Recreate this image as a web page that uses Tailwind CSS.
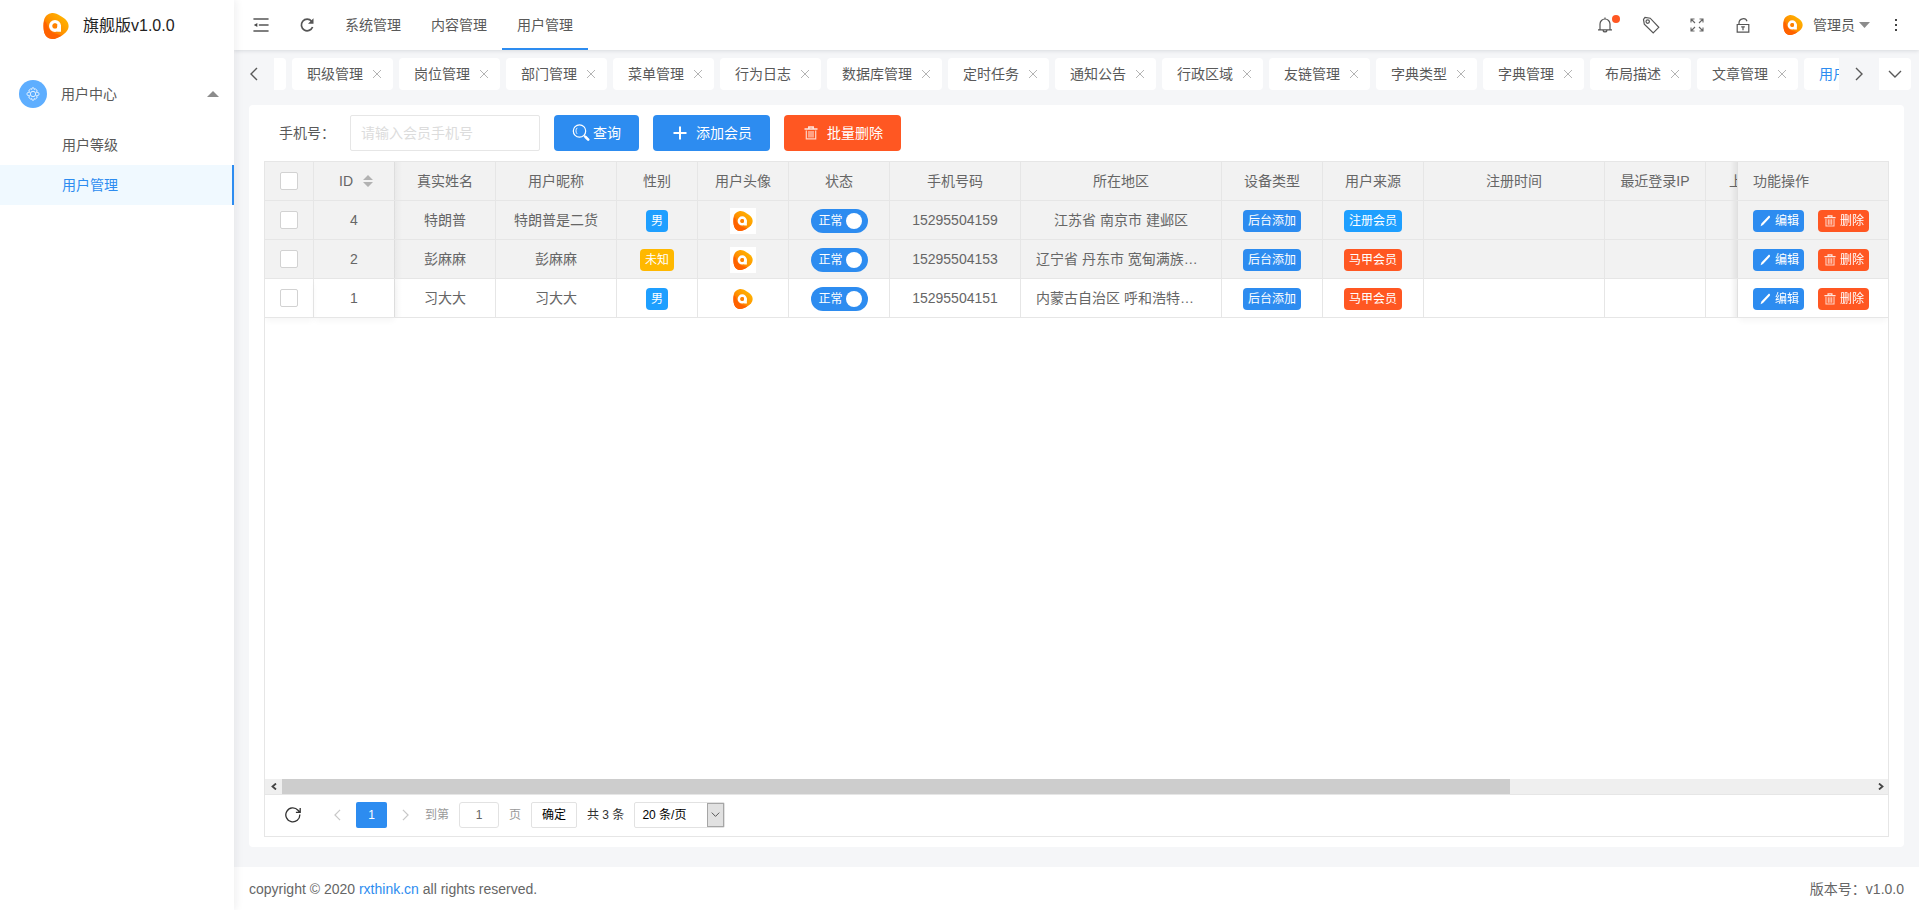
<!DOCTYPE html>
<html lang="zh-CN">
<head>
<meta charset="utf-8">
<meta name="viewport" content="width=device-width, initial-scale=1">
<title>用户管理 - 旗舰版v1.0.0</title>
<script src="https://cdn.jsdelivr.net/npm/@tailwindcss/browser@4"></script>
</head>
<body class="flex h-screen overflow-hidden bg-[#f5f6f8] font-['Liberation_Sans','Noto_Sans_CJK_SC',sans-serif] text-sm text-[#595959]">

<!-- Shared icons -->
<svg class="absolute size-0" aria-hidden="true">
  <defs>
    <linearGradient id="flame" x1="0.9" y1="0.1" x2="0.1" y2="0.9">
      <stop offset="0" stop-color="#ffb800"/><stop offset="0.5" stop-color="#ff9500"/><stop offset="1" stop-color="#ff5500"/>
    </linearGradient>
  </defs>
  <symbol id="i-logo" viewBox="0 0 26 26">
    <path fill="url(#flame)" d="M8 .3C11-.4 13.500 .6 18 3.200c4.500 2.600 7.600 5.500 7.600 9.800s-3 7.300-7.400 9.900C13.500 25.600 10.500 26.600 7 25.600 2.600 24.200.6 20.500.5 13S2.400 1.700 8 .3z"/>
    <path fill="#ff6200" d="M1.200 8C4.500 9.500 4 15 8 18.500c3.200 2.700 7.500 2.500 10.500 4.200-4.500 2.600-8 3.900-11.500 2.900C2.600 24.200.6 20.500.5 13c0-2 .3-3.600.7-5z"/>
    <circle cx="12" cy="12.900" r="4.300" fill="none" stroke="#fff" stroke-width="3.400"/>
    <path fill="#fff" d="M14 12h4v6.800h-2.600c-1 0-1.400-.6-1.400-1.600z"/>
    <circle cx="12" cy="12.900" r="2.400" fill="#ff8000"/>
  </symbol>
  <symbol id="i-x" viewBox="0 0 10 10"><path d="M1 1l8 8M9 1L1 9" fill="none" stroke="currentColor"/></symbol>
  <symbol id="i-left" viewBox="0 0 8 14"><path d="M7 1L1 7l6 6" fill="none" stroke="currentColor" stroke-width="1.400"/></symbol>
  <symbol id="i-right" viewBox="0 0 8 14"><path d="M1 1l6 6-6 6" fill="none" stroke="currentColor" stroke-width="1.400"/></symbol>
  <symbol id="i-down" viewBox="0 0 14 8"><path d="M1 1l6 6 6-6" fill="none" stroke="currentColor" stroke-width="1.400"/></symbol>
  <symbol id="i-trash" viewBox="0 0 14 14">
    <path d="M.5 3h13M4.800 2.500V1h4.400v1.500" fill="none" stroke="currentColor" stroke-width="1.500" opacity=".85"/>
    <path d="M2.300 4.500v8.300h9.400V4.500M5 5v6.500M7 5v6.500M9 5v6.500" fill="none" stroke="currentColor" stroke-width="1.200" opacity=".75"/>
  </symbol>
  <symbol id="i-pen" viewBox="0 0 14 14"><path fill="currentColor" d="M10.300 2.200c.5-.5 1.200-.4 1.500 0 .4.400.3 1 0 1.500L5 11 2.600 12.200l.8-2.700z"/></symbol>
</svg>

<aside class="relative z-20 flex w-[234px] shrink-0 flex-col bg-white shadow-[2px_0_8px_rgba(29,35,41,0.07)]">
  <div class="flex h-[52px] items-center gap-3.5 pl-[43px] text-base text-[#222]">
    <svg class="size-[26px]"><use href="#i-logo"/></svg>
    <span>旗舰版v1.0.0</span>
  </div>
  <nav class="pt-[17px]">
    <button class="flex h-[50px] w-full items-center pr-[15px] pl-[19px]">
      <span class="flex size-7 items-center justify-center rounded-full bg-[#5eaeff] text-white">
        <svg class="size-3.5" viewBox="0 0 14 14" fill="none" stroke="currentColor" stroke-width=".8">
          <path d="M5.800 2.400Q5.400.7 7 .7t1.200 1.700Q9.500 1.200 10.900 3.100q.9 1.300-.7 2Q12.900 4.900 13.200 7q-.3 2.100-3 1.900 1.600.7.700 2-1.400 1.900-2.700.7.400 1.700-1.200 1.700t-1.200-1.700q-1.300 1.200-2.700-.7-.9-1.300.7-2Q1.100 9.100.8 7q.3-2.100 3-1.900-1.600-.7-.7-2 1.400-1.900 2.700-.7z"/><circle cx="7" cy="7" r="2.700"/>
        </svg>
      </span>
      <span class="ml-3.5">用户中心</span>
      <svg class="ml-auto h-1.5 w-3" viewBox="0 0 12 6"><path d="M0 6l6-6 6 6z" fill="#8c8c8c"/></svg>
    </button>
    <ul class="pt-[6px]">
      <li><a href="#" class="flex h-10 items-center pl-[62px]">用户等级</a></li>
      <li><a href="#" class="flex h-10 items-center border-r-2 border-[#2d8cf0] bg-[#f0f9ff] pl-[62px] text-[#2d8cf0]">用户管理</a></li>
    </ul>
  </nav>
</aside>

<div class="flex min-w-0 flex-1 flex-col">
  <header class="relative z-10 flex h-[50px] shrink-0 items-center justify-between bg-white shadow-[0_1px_4px_rgba(0,21,41,0.12)]">
    <div class="flex h-full items-center">
      <button class="flex h-full w-[46px] items-center justify-center pl-2" aria-label="折叠菜单">
        <svg class="h-3.5 w-4" viewBox="0 0 16 14" fill="none" stroke="#555" stroke-width="1.600" stroke-linecap="round"><path d="M1 1h14M6.500 7H15M1 13h14"/><path d="M4.300 4.900v4.200L.8 7z" fill="#444" stroke="none"/></svg>
      </button>
      <button class="flex h-full w-[50px] items-center justify-center pl-1" aria-label="刷新">
        <svg class="size-4" viewBox="0 0 16 16"><path d="M12.600 4.200A5.800 5.800 0 1 0 13.600 10" fill="none" stroke="#555" stroke-width="1.700"/><path d="M14.500 1.300v5.500H9z" fill="#555"/></svg>
      </button>
      <nav class="flex h-full">
        <a href="#" class="flex h-full items-center px-[15px]">系统管理</a>
        <a href="#" class="flex h-full items-center px-[15px]">内容管理</a>
        <a href="#" class="flex h-full items-center border-y-2 border-t-transparent border-b-[#2d8cf0] px-[15px]">用户管理</a>
      </nav>
    </div>
    <div class="flex h-full items-center pr-2">
      <button class="relative flex h-full w-[46px] items-center justify-center" aria-label="消息">
        <svg class="size-4" viewBox="0 0 16 16" fill="none" stroke="#555" stroke-width="1.200"><path d="M1 12.800h14M3 12.500V7a5 5 0 0 1 10 0v5.500M8 .6V2M6 13.500c.5 1.900 3.500 1.900 4 0"/></svg>
        <span class="absolute top-[15px] right-2 size-2 rounded-full bg-[#ff5722]"></span>
      </button>
      <button class="flex h-full w-[46px] items-center justify-center" aria-label="标签">
        <svg class="size-[18px]" viewBox="0 0 18 18" fill="none" stroke="#555" stroke-width="1.200"><path d="M1.500 3.300l.8 5L11.200 17l5.600-5.700L8.200 2.200 3 1.400z"/><circle cx="5.700" cy="5.600" r="1.700"/></svg>
      </button>
      <button class="flex h-full w-[46px] items-center justify-center" aria-label="全屏">
        <svg class="size-3.5" viewBox="0 0 14 14" fill="none" stroke="#666" stroke-width="1.100"><path d="M1 4.500V1h3.500M1 1l4 4M9.500 1H13v3.500M13 1L9 5M1 9.500V13h3.500M1 13l4-4M9.500 13H13V9.500M13 13L9 9"/></svg>
      </button>
      <button class="flex h-full w-[46px] items-center justify-center" aria-label="锁屏">
        <svg class="h-[15px] w-3.5" viewBox="0 0 14 15" fill="none" stroke="#555" stroke-width="1.200"><path d="M1.200 6.500h11.600v7.600H1.200zM3 6.500V5c0-5 6.800-5.600 8-1.800M5.200 8.900h3.600M7 9v3.200"/></svg>
      </button>
      <button class="ml-[17px] flex h-full items-center">
        <svg class="size-5"><use href="#i-logo"/></svg>
        <span class="ml-[10px]">管理员</span>
        <svg class="ml-1 h-1.5 w-[11px]" viewBox="0 0 11 6"><path d="M0 0h11L5.500 6z" fill="#8c8c8c"/></svg>
      </button>
      <button class="ml-[11px] flex h-full w-[30px] items-center justify-center" aria-label="更多">
        <svg class="h-3.5 w-1" viewBox="0 0 4 14" fill="#444"><path d="M1 1h2v2H1zM1 6h2v2H1zM1 11h2v2H1z"/></svg>
      </button>
    </div>
  </header>

  <div class="flex shrink-0 pt-2 pr-2">
    <button class="flex h-8 w-10 shrink-0 items-center justify-center" aria-label="向左"><svg class="h-3.5 w-2"><use href="#i-left"/></svg></button>
    <ul class="flex min-w-0 flex-1 justify-end gap-1.5 overflow-hidden">
      <li class="h-8 w-3 shrink-0 rounded-r bg-white"></li>
      <li class="flex h-8 shrink-0 items-center gap-[9px] rounded bg-white pr-[11px] pl-[15px]"><a href="#">职级管理</a><button aria-label="关闭" class="text-[#b4b4b4]"><svg class="size-2.5"><use href="#i-x"/></svg></button></li>
      <li class="flex h-8 shrink-0 items-center gap-[9px] rounded bg-white pr-[11px] pl-[15px]"><a href="#">岗位管理</a><button aria-label="关闭" class="text-[#b4b4b4]"><svg class="size-2.5"><use href="#i-x"/></svg></button></li>
      <li class="flex h-8 shrink-0 items-center gap-[9px] rounded bg-white pr-[11px] pl-[15px]"><a href="#">部门管理</a><button aria-label="关闭" class="text-[#b4b4b4]"><svg class="size-2.5"><use href="#i-x"/></svg></button></li>
      <li class="flex h-8 shrink-0 items-center gap-[9px] rounded bg-white pr-[11px] pl-[15px]"><a href="#">菜单管理</a><button aria-label="关闭" class="text-[#b4b4b4]"><svg class="size-2.5"><use href="#i-x"/></svg></button></li>
      <li class="flex h-8 shrink-0 items-center gap-[9px] rounded bg-white pr-[11px] pl-[15px]"><a href="#">行为日志</a><button aria-label="关闭" class="text-[#b4b4b4]"><svg class="size-2.5"><use href="#i-x"/></svg></button></li>
      <li class="flex h-8 shrink-0 items-center gap-[9px] rounded bg-white pr-[11px] pl-[15px]"><a href="#">数据库管理</a><button aria-label="关闭" class="text-[#b4b4b4]"><svg class="size-2.5"><use href="#i-x"/></svg></button></li>
      <li class="flex h-8 shrink-0 items-center gap-[9px] rounded bg-white pr-[11px] pl-[15px]"><a href="#">定时任务</a><button aria-label="关闭" class="text-[#b4b4b4]"><svg class="size-2.5"><use href="#i-x"/></svg></button></li>
      <li class="flex h-8 shrink-0 items-center gap-[9px] rounded bg-white pr-[11px] pl-[15px]"><a href="#">通知公告</a><button aria-label="关闭" class="text-[#b4b4b4]"><svg class="size-2.5"><use href="#i-x"/></svg></button></li>
      <li class="flex h-8 shrink-0 items-center gap-[9px] rounded bg-white pr-[11px] pl-[15px]"><a href="#">行政区域</a><button aria-label="关闭" class="text-[#b4b4b4]"><svg class="size-2.5"><use href="#i-x"/></svg></button></li>
      <li class="flex h-8 shrink-0 items-center gap-[9px] rounded bg-white pr-[11px] pl-[15px]"><a href="#">友链管理</a><button aria-label="关闭" class="text-[#b4b4b4]"><svg class="size-2.5"><use href="#i-x"/></svg></button></li>
      <li class="flex h-8 shrink-0 items-center gap-[9px] rounded bg-white pr-[11px] pl-[15px]"><a href="#">字典类型</a><button aria-label="关闭" class="text-[#b4b4b4]"><svg class="size-2.5"><use href="#i-x"/></svg></button></li>
      <li class="flex h-8 shrink-0 items-center gap-[9px] rounded bg-white pr-[11px] pl-[15px]"><a href="#">字典管理</a><button aria-label="关闭" class="text-[#b4b4b4]"><svg class="size-2.5"><use href="#i-x"/></svg></button></li>
      <li class="flex h-8 shrink-0 items-center gap-[9px] rounded bg-white pr-[11px] pl-[15px]"><a href="#">布局描述</a><button aria-label="关闭" class="text-[#b4b4b4]"><svg class="size-2.5"><use href="#i-x"/></svg></button></li>
      <li class="flex h-8 shrink-0 items-center gap-[9px] rounded bg-white pr-[11px] pl-[15px]"><a href="#">文章管理</a><button aria-label="关闭" class="text-[#b4b4b4]"><svg class="size-2.5"><use href="#i-x"/></svg></button></li>
      <li class="flex h-8 w-[35px] shrink-0 items-center overflow-hidden rounded-l bg-white pl-[15px] whitespace-nowrap text-[#2d8cf0]"><a href="#">用户管理</a></li>
    </ul>
    <button class="flex h-8 w-10 shrink-0 items-center justify-center" aria-label="向右"><svg class="h-3.5 w-2"><use href="#i-right"/></svg></button>
    <button class="flex size-8 shrink-0 items-center justify-center rounded-r bg-white" aria-label="展开标签"><svg class="h-2 w-3.5"><use href="#i-down"/></svg></button>
  </div>

  <main class="mx-[15px] mt-[15px] mb-5 flex min-h-0 flex-1 flex-col rounded bg-white px-[15px] py-2.5">
    <form class="flex items-center pb-2.5 pl-[15px]" onsubmit="return false">
      <label for="phone" class="w-[71px]">手机号：</label>
      <input id="phone" type="text" placeholder="请输入会员手机号" class="mr-3.5 h-9 w-[190px] rounded-xs border border-[#e6e6e6] px-2.5 outline-none placeholder:text-[#dcdcdc]">
      <button class="mr-3.5 flex h-9 items-center gap-[3px] rounded bg-[#2d8cf0] px-[18px] text-white">
        <svg class="size-[18px]" viewBox="0 0 18 18" fill="none" stroke="currentColor"><circle cx="7.500" cy="7" r="6.200" stroke-width="1.200"/><path d="M5.200 3.800C3.600 5.500 3.600 8 5 9.800" stroke-width=".9"/><path d="M12 11.600l1.600 1.400" stroke-width="1.400"/><path d="M13.600 13l2.600 2.600" stroke-width="2.600" stroke-linecap="round"/></svg>查询
      </button>
      <button class="mr-3.5 flex h-9 items-center gap-[7px] rounded bg-[#2d8cf0] px-[18px] text-white">
        <svg class="size-[18px]" viewBox="0 0 18 18"><path d="M9 2.500v13M2.500 9h13" stroke="currentColor" stroke-width="2"/></svg>添加会员
      </button>
      <button class="flex h-9 items-center gap-[7px] rounded bg-[#ff5722] px-[18px] text-white">
        <span class="flex w-[18px] justify-center"><svg class="size-3.5"><use href="#i-trash"/></svg></span>批量删除
      </button>
    </form>

    <section class="flex min-h-0 flex-1 flex-col border border-[#e6e6e6] text-[#666]">
      <div class="min-h-0 flex-1 overflow-hidden">
        <table class="w-[1722px] min-w-full table-fixed border-separate border-spacing-0 text-center [&_td]:h-[39px] [&_td]:border-r [&_td]:border-b [&_td]:border-[#e6e6e6] [&_td]:p-0 [&_td:has(span,label,button)]:pt-[2px] [&_th]:h-[39px] [&_th]:border-r [&_th]:border-b [&_th]:border-[#e6e6e6] [&_th]:p-0 [&_th]:font-normal">
          <colgroup>
            <col class="w-[49px]"><col class="w-[81px]"><col class="w-[101px]"><col class="w-[121px]"><col class="w-[81px]"><col class="w-[91px]"><col class="w-[101px]"><col class="w-[131px]"><col class="w-[201px]"><col class="w-[101px]"><col class="w-[101px]"><col class="w-[181px]"><col class="w-[101px]"><col class="w-[131px]"><col class="w-[150px]">
          </colgroup>
          <thead>
            <tr class="bg-[#f2f2f2]">
              <th><input type="checkbox" aria-label="全选" class="block mx-auto size-[18px] appearance-none rounded-xs border border-[#d2d2d2] bg-white"></th>
              <th class="relative after:absolute after:inset-y-0 after:left-full after:w-2 after:bg-linear-to-r after:from-black/4 after:to-transparent">
                <button class="mx-auto flex items-center gap-2.5 pl-1">ID
                  <svg class="h-3 w-2.5" viewBox="0 0 10 12" fill="#b2b2b2"><path d="M0 5l5-5 5 5zM0 7h10l-5 5z"/></svg>
                </button>
              </th>
              <th>真实姓名</th><th>用户昵称</th><th>性别</th><th>用户头像</th><th>状态</th><th>手机号码</th><th>所在地区</th><th>设备类型</th><th>用户来源</th><th>注册时间</th><th>最近登录IP</th><th>上次登录地点</th>
              <th class="sticky right-0 z-10 border-r-0! bg-[#f2f2f2] pl-[15px]! text-left before:absolute before:inset-y-0 before:right-full before:w-2 before:border-r before:border-[#e0e0e0] before:bg-linear-to-l before:from-black/6 before:to-transparent">功能操作</th>
            </tr>
          </thead>
          <tbody>
            <tr class="bg-[#f2f2f2]">
              <td><input type="checkbox" aria-label="选择 4" class="block mx-auto size-[18px] appearance-none rounded-xs border border-[#d2d2d2] bg-white"></td>
              <td class="relative after:absolute after:inset-y-0 after:left-full after:w-2 after:bg-linear-to-r after:from-black/4 after:to-transparent">4</td>
              <td>特朗普</td><td>特朗普是二货</td>
              <td><span class="mx-auto flex h-[22px] w-fit items-center rounded bg-[#1e9fff] px-[5px] text-xs text-white">男</span></td>
              <td><span class="mx-auto flex size-[26px] items-center justify-center bg-white"><svg class="size-5"><use href="#i-logo"/></svg></span></td>
              <td><label class="mx-auto flex h-6 w-[57px] items-center gap-[3px] rounded-full bg-[#2d8cf0] pl-2 text-xs text-white">正常<input type="checkbox" role="switch" checked class="size-4 appearance-none rounded-full bg-white"></label></td>
              <td>15295504159</td>
              <td><div class="truncate px-[15px]">江苏省 南京市 建邺区</div></td>
              <td><span class="mx-auto flex h-[22px] w-fit items-center rounded bg-[#2d8cf0] px-[5px] text-xs text-white">后台添加</span></td>
              <td><span class="mx-auto flex h-[22px] w-fit items-center rounded bg-[#1e9fff] px-[5px] text-xs text-white">注册会员</span></td>
              <td></td><td></td><td></td>
              <td class="sticky right-0 z-10 border-r-0! bg-[#f2f2f2] pl-[15px]! before:absolute before:inset-y-0 before:right-full before:w-2 before:border-r before:border-[#e0e0e0] before:bg-linear-to-l before:from-black/6 before:to-transparent">
                <div class="flex gap-3.5 text-xs text-white">
                  <button class="flex h-[22px] items-center gap-[3px] rounded bg-[#2d8cf0] px-[5px]"><svg class="size-3.5"><use href="#i-pen"/></svg>编辑</button>
                  <button class="flex h-[22px] items-center gap-[3px] rounded bg-[#ff5722] px-[5px]"><svg class="h-3 w-3.5"><use href="#i-trash"/></svg>删除</button>
                </div>
              </td>
            </tr>
            <tr class="bg-[#f2f2f2]">
              <td><input type="checkbox" aria-label="选择 2" class="block mx-auto size-[18px] appearance-none rounded-xs border border-[#d2d2d2] bg-white"></td>
              <td class="relative after:absolute after:inset-y-0 after:left-full after:w-2 after:bg-linear-to-r after:from-black/4 after:to-transparent">2</td>
              <td>彭麻麻</td><td>彭麻麻</td>
              <td><span class="mx-auto flex h-[22px] w-fit items-center rounded bg-[#ffb800] px-[5px] text-xs text-white">未知</span></td>
              <td><span class="mx-auto flex size-[26px] items-center justify-center bg-white"><svg class="size-5"><use href="#i-logo"/></svg></span></td>
              <td><label class="mx-auto flex h-6 w-[57px] items-center gap-[3px] rounded-full bg-[#2d8cf0] pl-2 text-xs text-white">正常<input type="checkbox" role="switch" checked class="size-4 appearance-none rounded-full bg-white"></label></td>
              <td>15295504153</td>
              <td><div class="truncate px-[15px]">辽宁省 丹东市 宽甸满族自治县</div></td>
              <td><span class="mx-auto flex h-[22px] w-fit items-center rounded bg-[#2d8cf0] px-[5px] text-xs text-white">后台添加</span></td>
              <td><span class="mx-auto flex h-[22px] w-fit items-center rounded bg-[#ff5722] px-[5px] text-xs text-white">马甲会员</span></td>
              <td></td><td></td><td></td>
              <td class="sticky right-0 z-10 border-r-0! bg-[#f2f2f2] pl-[15px]! before:absolute before:inset-y-0 before:right-full before:w-2 before:border-r before:border-[#e0e0e0] before:bg-linear-to-l before:from-black/6 before:to-transparent">
                <div class="flex gap-3.5 text-xs text-white">
                  <button class="flex h-[22px] items-center gap-[3px] rounded bg-[#2d8cf0] px-[5px]"><svg class="size-3.5"><use href="#i-pen"/></svg>编辑</button>
                  <button class="flex h-[22px] items-center gap-[3px] rounded bg-[#ff5722] px-[5px]"><svg class="h-3 w-3.5"><use href="#i-trash"/></svg>删除</button>
                </div>
              </td>
            </tr>
            <tr class="bg-white">
              <td class="shadow-[0_4px_6px_-1px_rgba(0,0,0,0.04)]"><input type="checkbox" aria-label="选择 1" class="block mx-auto size-[18px] appearance-none rounded-xs border border-[#d2d2d2] bg-white"></td>
              <td class="relative shadow-[0_4px_6px_-1px_rgba(0,0,0,0.04)] after:absolute after:inset-y-0 after:left-full after:w-2 after:bg-linear-to-r after:from-black/4 after:to-transparent">1</td>
              <td>习大大</td><td>习大大</td>
              <td><span class="mx-auto flex h-[22px] w-fit items-center rounded bg-[#1e9fff] px-[5px] text-xs text-white">男</span></td>
              <td><span class="mx-auto flex size-[26px] items-center justify-center bg-white"><svg class="size-5"><use href="#i-logo"/></svg></span></td>
              <td><label class="mx-auto flex h-6 w-[57px] items-center gap-[3px] rounded-full bg-[#2d8cf0] pl-2 text-xs text-white">正常<input type="checkbox" role="switch" checked class="size-4 appearance-none rounded-full bg-white"></label></td>
              <td>15295504151</td>
              <td><div class="truncate px-[15px]">内蒙古自治区 呼和浩特市 新城区</div></td>
              <td><span class="mx-auto flex h-[22px] w-fit items-center rounded bg-[#2d8cf0] px-[5px] text-xs text-white">后台添加</span></td>
              <td><span class="mx-auto flex h-[22px] w-fit items-center rounded bg-[#ff5722] px-[5px] text-xs text-white">马甲会员</span></td>
              <td></td><td></td><td></td>
              <td class="sticky right-0 z-10 border-r-0! bg-white pl-[15px]! shadow-[0_4px_6px_-1px_rgba(0,0,0,0.04)] before:absolute before:inset-y-0 before:right-full before:w-2 before:border-r before:border-[#e0e0e0] before:bg-linear-to-l before:from-black/6 before:to-transparent">
                <div class="flex gap-3.5 text-xs text-white">
                  <button class="flex h-[22px] items-center gap-[3px] rounded bg-[#2d8cf0] px-[5px]"><svg class="size-3.5"><use href="#i-pen"/></svg>编辑</button>
                  <button class="flex h-[22px] items-center gap-[3px] rounded bg-[#ff5722] px-[5px]"><svg class="h-3 w-3.5"><use href="#i-trash"/></svg>删除</button>
                </div>
              </td>
            </tr>
          </tbody>
        </table>
      </div>

      <!-- Horizontal scroll bar -->
      <div class="flex h-[15px] shrink-0 bg-[#efefef] text-[#444]">
        <button class="flex w-[17px] items-center justify-center" aria-label="向左滚动"><svg class="h-[7px] w-[6px]" viewBox="0 0 6 7"><path d="M5 .5l-3.500 3 3.500 3" fill="none" stroke="currentColor" stroke-width="1.800"/></svg></button>
        <div class="flex-1"><div class="h-full w-[77.2%] bg-[#cdcdcd]"></div></div>
        <button class="flex w-[15px] items-center justify-center" aria-label="向右滚动"><svg class="h-[7px] w-[6px]" viewBox="0 0 6 7"><path d="M1 .5l3.500 3-3.500 3" fill="none" stroke="currentColor" stroke-width="1.800"/></svg></button>
      </div>

      <div class="flex h-[42px] shrink-0 items-center border-t border-[#e6e6e6] pb-[2px] pl-5 text-xs">
        <button aria-label="刷新表格" class="mr-[33px]"><svg class="size-4" viewBox="0 0 16 16" fill="none" stroke="#333" stroke-width="1.300"><path d="M14.800 7.500A7 7 0 1 1 13 3.200l1.600 1.800M15.200 1v4.300h-4.300"/></svg></button>
        <button aria-label="上一页" class="mr-[15px] text-[#c8c8c8]"><svg class="h-3 w-[7px]"><use href="#i-left"/></svg></button>
        <button class="h-[26px] w-[31px] rounded-xs bg-[#2d8cf0] text-white">1</button>
        <button aria-label="下一页" class="mr-4 ml-[15px] text-[#c8c8c8]"><svg class="h-3 w-[7px]"><use href="#i-right"/></svg></button>
        <label for="page" class="mr-2.5 text-[#999]">到第</label>
        <input id="page" type="text" value="1" class="h-[26px] w-10 rounded-[3px] border border-[#e2e2e2] text-center outline-none">
        <span class="mx-2.5 text-[#999]">页</span>
        <button class="h-[26px] w-[46px] rounded-xs border border-[#e2e2e2] text-black">确定</button>
        <span class="mx-2.5 text-[#333]">共 3 条</span>
        <span class="relative">
          <select aria-label="每页条数" class="block h-[26px] w-[91px] appearance-none rounded-xs border border-[#e2e2e2] bg-white pl-[7px] text-black outline-none"><option>20 条/页</option><option>50 条/页</option></select>
          <span class="pointer-events-none absolute inset-y-px right-px flex w-[17px] items-center justify-center border border-[#a6a6a6] bg-[#e1e1e1] text-[#444]"><svg class="h-[5px] w-[9px]"><use href="#i-down"/></svg></span>
        </span>
      </div>
    </section>
  </main>

  <footer class="flex h-[43px] shrink-0 items-center justify-between bg-white px-[15px] text-[#666]">
    <p>copyright © 2020 <a href="#" class="text-[#2d8cf0]">rxthink.cn</a> all rights reserved.</p>
    <p>版本号：v1.0.0</p>
  </footer>
</div>
</body>
</html>
